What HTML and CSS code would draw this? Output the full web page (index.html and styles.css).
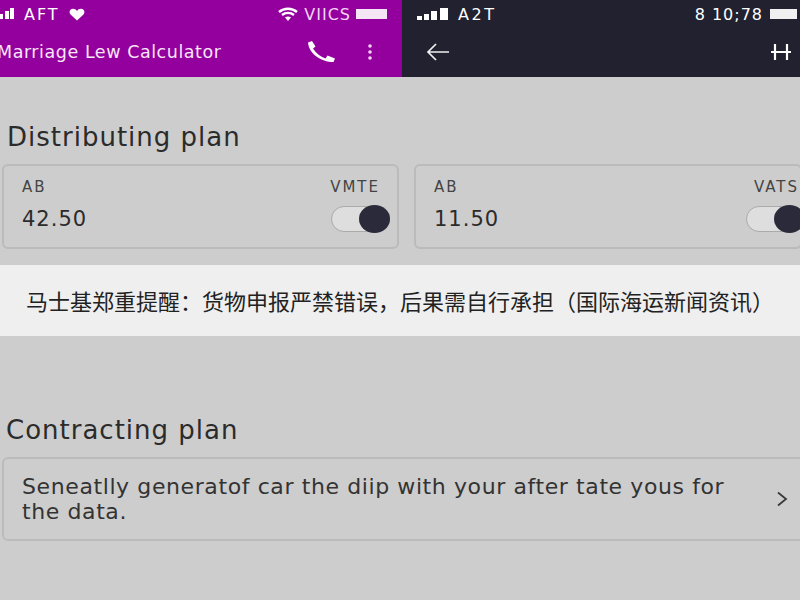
FILE: index.html
```html
<!DOCTYPE html>
<html lang="en">
<head>
  <meta charset="UTF-8">
  <title>Marriage Law Calculator</title>
  <link rel="stylesheet" href="styles.css">
</head>
<body>
  <div class="page">
    <!-- Two phone headers side by side -->
    <header class="top">
      <div class="top-half purple">
        <div class="status">
          <div class="status-group">
            <svg class="signal-left" width="15" height="12" viewBox="0 0 15 12"><rect x="0" y="6" width="3" height="5" fill="#fff"/><rect x="5" y="3" width="4" height="8" fill="#fff"/><rect x="10" y="0" width="4" height="11" fill="#fff"/></svg>
            <span class="status-text aft">AFT</span>
            <svg class="heart" width="16" height="13" viewBox="0 0 16 13"><path d="M8 12.5 1.5 6.500C-.5 4 1 .8 4 .8c1.800 0 3 .9 4 2.200C9 1.700 10.200.8 12 .8c3 0 4.500 3.200 2.500 5.700z" fill="#fff"/></svg>
          </div>
          <div class="status-group">
            <svg width="20" height="15" viewBox="0 0 20 15"><path d="M1 5c5-4.300 13-4.300 18 0M4 8c3.500-2.800 8.500-2.800 12 0" fill="none" stroke="#fff" stroke-width="2.400"/><path d="M7 10.500c1.800-1.300 4.200-1.300 6 0L10 14z" fill="#fff"/></svg>
            <span class="status-text vics">VIICS</span>
            <div class="battery"></div>
          </div>
        </div>
        <div class="toolbar">
          <span class="app-title">Marriage Lew Calculator</span>
          <div class="toolbar-icons">
            <svg width="29" height="22" viewBox="0 0 29 22"><path d="M1 1.500 5 0 8.500 5.500 6 7.500C9 12 13 15.500 18.500 17.500L20.500 14.500 28 17.500 26.500 21C14 21 2 13 1 1.500z" fill="#fff"/></svg>
            <svg width="6" height="16" viewBox="0 0 6 16"><circle cx="3" cy="2" r="1.800" fill="#f4d4f6"/><circle cx="3" cy="8" r="1.800" fill="#f4d4f6"/><circle cx="3" cy="14" r="1.800" fill="#f4d4f6"/></svg>
          </div>
        </div>
      </div>
      <div class="top-half dark">
        <div class="status">
          <div class="status-group">
            <svg width="32" height="13" viewBox="0 0 32 13"><rect x="0" y="8" width="5" height="4" fill="#fff"/><rect x="7" y="6" width="5" height="6" fill="#fff"/><rect x="14" y="3" width="6" height="9" fill="#fff"/><rect x="23" y="0" width="8" height="12" fill="#fff"/></svg>
            <span class="status-text a2t">A2T</span>
          </div>
          <div class="status-group">
            <span class="status-text clock">8 10;78</span>
            <div class="battery battery-dark"></div>
          </div>
        </div>
        <div class="toolbar">
          <svg width="24" height="18" viewBox="0 0 24 18"><path d="M23 9H2M10 1 2 9l8 8" fill="none" stroke="#f0f0f0" stroke-width="1.700"/></svg>
          <svg width="20" height="16" viewBox="0 0 20 16"><path d="M0 8h20M4 0v16M16 0v16" fill="none" stroke="#fff" stroke-width="2.200"/></svg>
        </div>
      </div>
    </header>

    <main class="content">
      <h2 class="plan-title first">Distributing plan</h2>
      <div class="cards">
        <div class="card">
          <div class="card-row">
            <span class="card-label">AB</span>
            <span class="card-label card-label-end">VMTE</span>
          </div>
          <div class="card-row">
            <span class="card-value">42.50</span>
            <div class="toggle"><div class="knob"></div></div>
          </div>
        </div>
        <div class="card card-right">
          <div class="card-row">
            <span class="card-label">AB</span>
            <span class="card-label card-label-edge">VATS</span>
          </div>
          <div class="card-row">
            <span class="card-value">11.50</span>
            <div class="toggle"><div class="knob"></div></div>
          </div>
        </div>
      </div>

      <div class="banner">马士基郑重提醒：货物申报严禁错误，后果需自行承担（国际海运新闻资讯）</div>

      <h2 class="plan-title second">Contracting plan</h2>
      <div class="note">
        <p class="note-text">Seneatlly generatof car the diip with your after tate yous for the data.</p>
        <svg width="12" height="16" viewBox="0 0 12 16"><path d="M2 1.500 10 8l-8 6.500" fill="none" stroke="#3a3a3a" stroke-width="1.800"/></svg>
      </div>
    </main>
  </div>
</body>
</html>
```

FILE: styles.css
```css
body {
  margin: 0;
  font-family: "DejaVu Sans", "Liberation Sans", sans-serif;
  background-color: #cdcdcd;
}
.page {
  width: 800px;
  height: 600px;
  overflow: hidden;
}
.top {
  display: flex;
  height: 77px;
}
.top-half {
  color: white;
  box-sizing: border-box;
}
.purple {
  width: 402px;
  background-color: #93009e;
}
.dark {
  width: 398px;
  background-color: #21212f;
}
.status {
  display: flex;
  justify-content: space-between;
  align-items: center;
  height: 28px;
}
.purple .status {
  padding: 0 15px 0 0;
}
.dark .status {
  padding: 0 3px 0 15px;
}
.status-group {
  display: flex;
  align-items: center;
}
.status-text {
  font-size: 16px;
  margin-left: 9px;
}
.aft {
  letter-spacing: 2px;
}
.heart {
  margin-left: 9px;
}
.vics {
  letter-spacing: 1px;
  color: #f4d4f6;
  margin-left: 6px;
}
.a2t {
  letter-spacing: 2.5px;
}
.clock {
  letter-spacing: 1px;
}
.battery {
  width: 31px;
  height: 10px;
  margin-left: 5px;
  background-color: #f5e6f6;
}
.battery-dark {
  width: 27px;
  margin-left: 7px;
  background-color: #f0f0f0;
}
.toolbar {
  display: flex;
  justify-content: space-between;
  align-items: center;
  height: 48px;
}
.purple .toolbar {
  padding-right: 29px;
}
.dark .toolbar {
  padding: 0 9px 0 24px;
}
.app-title {
  font-size: 17.5px;
  letter-spacing: 0.55px;
  margin-left: -3px;
  color: #f8e6f9;
}
.toolbar-icons {
  display: flex;
  align-items: center;
  gap: 31px;
}
.content {
  padding-top: 46px;
}
.plan-title {
  margin: 0;
  font-size: 26px;
  line-height: 29px;
  font-weight: normal;
  letter-spacing: 1px;
  color: #2b2b2b;
  padding-left: 7px;
}
.cards {
  display: grid;
  grid-template-columns: 397px 388px;
  gap: 15px;
  margin: 12px 0 0 2px;
}
.card {
  box-sizing: border-box;
  height: 85px;
  padding: 12px 7px 0 18px;
  border: 2px solid #bbb;
  border-radius: 6px;
}
.card-right {
  padding-right: 0;
}
.card-row {
  display: flex;
  justify-content: space-between;
  align-items: center;
}
.card-label {
  font-size: 15px;
  letter-spacing: 2px;
  color: #444;
}
.card-label-end {
  margin-right: 10px;
}
.card-label-edge {
  margin-right: 1px;
}
.card-value {
  font-size: 21px;
  letter-spacing: 1px;
  color: #2b2b2b;
}
.card-row + .card-row {
  margin-top: 10px;
}
.toggle {
  position: relative;
  width: 59px;
  height: 26px;
  box-sizing: border-box;
  background-color: #dedede;
  border: 1px solid #aaa;
  border-radius: 13px;
}
.knob {
  position: absolute;
  top: -2px;
  right: -1px;
  width: 31px;
  height: 28px;
  background-color: #2a2a3a;
  border-radius: 50%;
}
.card-right .toggle {
  margin-right: -5px;
}
.banner {
  height: 71px;
  margin-top: 16px;
  padding-left: 26px;
  line-height: 71px;
  font-family: "Noto Sans CJK SC", "Liberation Sans", sans-serif;
  font-size: 22px;
  color: #222;
  background-color: #efefef;
  white-space: nowrap;
}
.second {
  margin-top: 80px;
  padding-left: 6px;
}
.note {
  display: flex;
  align-items: center;
  justify-content: space-between;
  box-sizing: border-box;
  width: 802px;
  height: 84px;
  margin: 12px 0 0 2px;
  padding: 0 14px 0 18px;
  border: 2px solid #bbb;
  border-radius: 6px;
}
.note-text {
  margin: 0;
  width: 720px;
  font-size: 22px;
  line-height: 25px;
  letter-spacing: 0.6px;
  color: #333;
}
```
